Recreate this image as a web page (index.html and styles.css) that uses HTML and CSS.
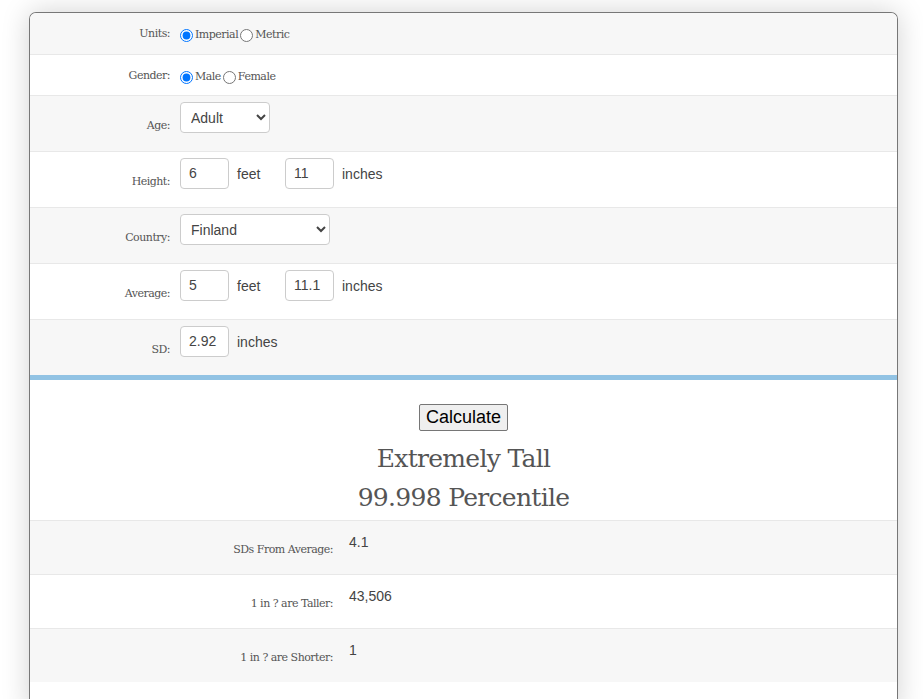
FILE: index.html
```html
<!DOCTYPE html>
<html lang="en">
<head>
    <meta charset="UTF-8">
    <title>Height Percentile Calculator</title>
    <link rel="stylesheet" href="styles.css">
</head>
<body>
    <div class="calc">
        <div class="form">
            <div class="row short">
                <span class="lbl">Units:</span>
                <div class="field">
                    <label class="opt"><input type="radio" name="units" checked>Imperial</label>
                    <label class="opt"><input type="radio" name="units">Metric</label>
                </div>
            </div>
            <div class="row short">
                <span class="lbl">Gender:</span>
                <div class="field">
                    <label class="opt"><input type="radio" name="gender" checked>Male</label>
                    <label class="opt"><input type="radio" name="gender">Female</label>
                </div>
            </div>
            <div class="row">
                <span class="lbl">Age:</span>
                <div class="field">
                    <select class="sel age">
                        <option>Adult</option>
                        <option>Child</option>
                    </select>
                </div>
            </div>
            <div class="row">
                <span class="lbl">Height:</span>
                <div class="field">
                    <input class="num" type="text" value="6"><span class="unit">feet</span>
                    <input class="num" type="text" value="11"><span class="unit">inches</span>
                </div>
            </div>
            <div class="row">
                <span class="lbl">Country:</span>
                <div class="field">
                    <select class="sel country">
                        <option>Finland</option>
                        <option>Sweden</option>
                    </select>
                </div>
            </div>
            <div class="row">
                <span class="lbl">Average:</span>
                <div class="field">
                    <input class="num" type="text" value="5"><span class="unit">feet</span>
                    <input class="num" type="text" value="11.1"><span class="unit">inches</span>
                </div>
            </div>
            <div class="row">
                <span class="lbl">SD:</span>
                <div class="field">
                    <input class="num" type="text" value="2.92"><span class="unit">inches</span>
                </div>
            </div>
        </div>

        <div class="divider"></div>

        <div class="result">
            <button type="button" class="calc-btn">Calculate</button>
            <h2>Extremely Tall<br>99.998 Percentile</h2>
        </div>

        <div class="stats">
            <div class="stat">
                <span class="lbl">SDs From Average:</span>
                <span class="val">4.1</span>
            </div>
            <div class="stat">
                <span class="lbl">1 in ? are Taller:</span>
                <span class="val">43,506</span>
            </div>
            <div class="stat">
                <span class="lbl">1 in ? are Shorter:</span>
                <span class="val">1</span>
            </div>
        </div>
        <div class="tail"></div>
    </div>
</body>
</html>
```

FILE: styles.css
```css
body {
    margin: 0;
    padding: 12px 25px 0 29px;
    background: #fff;
    font-family: "Liberation Sans", Arial, sans-serif;
    color: #444;
}

.calc {
    border: 1px solid #777;
    border-bottom: none;
    border-radius: 7px 7px 0 0;
    box-shadow: 0 0 28px rgba(0, 0, 0, 0.18);
    background: #fff;
    overflow: hidden;
}

.row {
    display: grid;
    grid-template-columns: 140px 1fr;
    column-gap: 10px;
    min-height: 55px;
    border-top: 1px solid #e8e8e8;
}

.row:first-child {
    border-top: none;
    min-height: 41px;
}
.row:nth-child(odd) { background: #f7f7f7; }

.row.short { min-height: 40px; }
.row.short:first-child { min-height: 41px; }

.lbl {
    font-family: "DejaVu Serif", serif;
    font-size: 11px;
    color: #555;
    text-align: right;
    align-self: center;
    letter-spacing: -0.5px;
}

.row .lbl { padding-top: 3px; }
.row.short .lbl { padding-top: 0; }

.field {
    display: flex;
    align-items: center;
    padding-top: 6px;
    align-self: start;
}

.row.short .field {
    align-self: center;
    padding-top: 2px;
}

.opt {
    display: flex;
    align-items: center;
    font-family: "DejaVu Serif", serif;
    font-size: 11px;
    color: #555;
    letter-spacing: -0.5px;
    margin-right: 2px;
}

.opt input {
    margin: 2px 2px 0 0;
    width: 13px;
    height: 13px;
}

.num {
    width: 49px;
    height: 31px;
    box-sizing: border-box;
    border: 1px solid #ccc;
    border-radius: 4px;
    padding: 0 8px 2px;
    font-family: "Liberation Sans", Arial, sans-serif;
    font-size: 14px;
    color: #444;
    margin: 0;
}

.unit {
    font-size: 14px;
    color: #444;
    width: 48px;
    padding-left: 8px;
}

.sel {
    height: 31px;
    border: 1px solid #ccc;
    border-radius: 4px;
    background: #fff;
    font-family: "Liberation Sans", Arial, sans-serif;
    font-size: 14px;
    color: #444;
    padding: 0 6px;
}

.sel.age { width: 90px; }
.sel.country { width: 150px; }

.divider {
    height: 5px;
    background: #92c3e4;
}

.result {
    text-align: center;
    padding-top: 24px;
    padding-bottom: 3px;
    border-bottom: 1px solid #e8e8e8;
}

.calc-btn {
    font-family: "Liberation Sans", Arial, sans-serif;
    font-size: 18px;
    color: #000;
    background: #efefef;
    border: 1px solid #767676;
    border-radius: 2px;
    padding: 1px 6px;
    height: 27px;
}

.result h2 {
    margin: 8px 0 0;
    font-family: "DejaVu Serif", serif;
    font-weight: normal;
    font-size: 25px;
    line-height: 39px;
    color: #555;
    letter-spacing: -0.7px;
}

.stat {
    display: grid;
    grid-template-columns: 303px 1fr;
    column-gap: 16px;
    min-height: 53px;
    border-top: 1px solid #e8e8e8;
}

.stat:first-child { border-top: none; }
.stat:nth-child(odd) { background: #f7f7f7; }

.stat .lbl { padding-top: 4px; }

.val {
    font-size: 14px;
    color: #444;
    padding-top: 13px;
}

.tail { height: 30px; }
```
